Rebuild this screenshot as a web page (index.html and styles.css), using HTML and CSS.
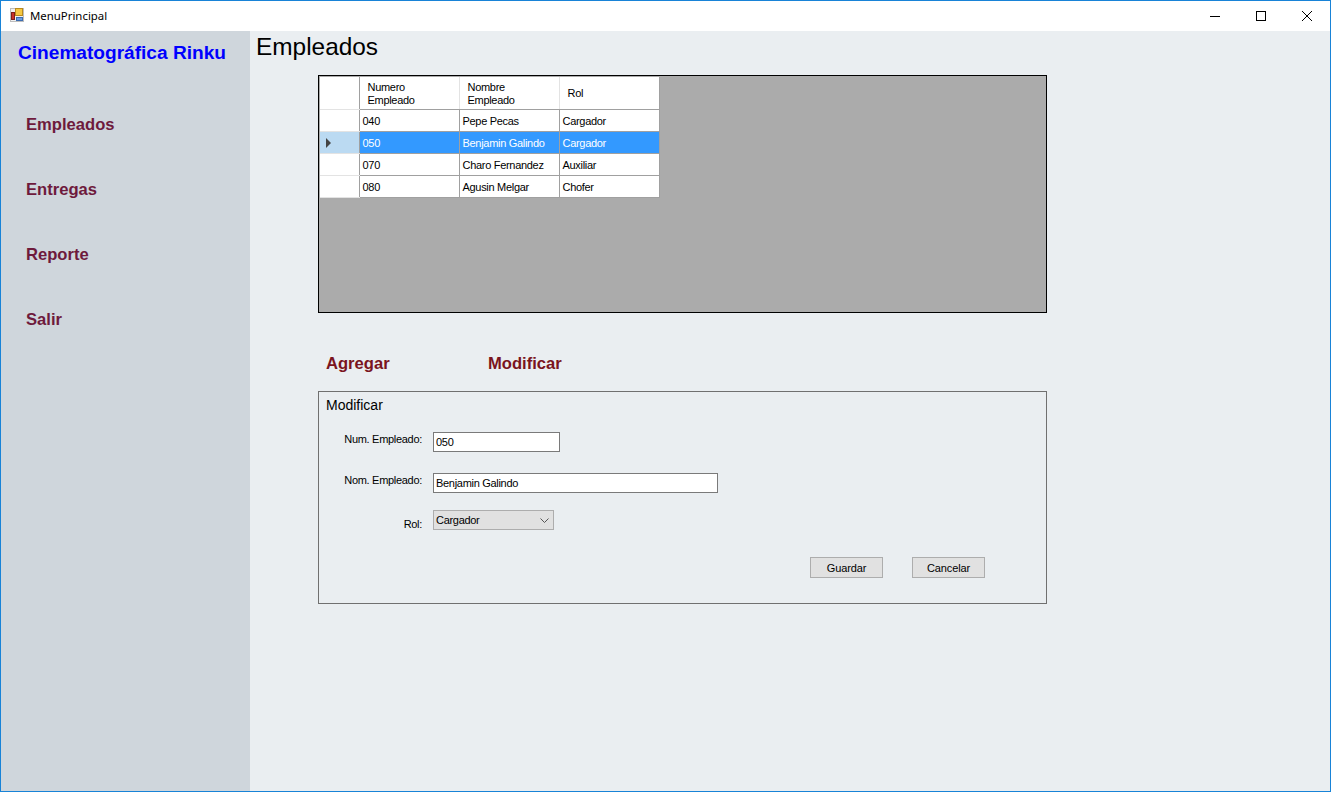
FILE: index.html
```html
<!DOCTYPE html>
<html lang="es">
<head>
    <meta charset="UTF-8">
    <title>MenuPrincipal</title>
    <link rel="stylesheet" href="styles.css">
</head>
<body>
    <div class="window">
        <div class="titlebar">
            <svg class="app-icon" width="14" height="14" viewBox="0 0 14 14">
                <rect x="0" y="0" width="14" height="14" fill="#bdbdbd"/>
                <rect x="1" y="1" width="12" height="12" fill="#f0f0f0"/>
                <rect x="5.5" y="0.5" width="7" height="7" fill="#f5c842" stroke="#b98a1e"/>
                <rect x="1.5" y="4.5" width="3" height="7" fill="#c8322a" stroke="#7d1f18"/>
                <rect x="6.5" y="9.5" width="6" height="3" fill="#6c9ee0" stroke="#3c6cb0"/>
            </svg>
            <span class="title-text">MenuPrincipal</span>
            <div class="win-controls">
                <svg class="win-btn" width="46" height="30" viewBox="0 0 46 30"><path d="M18 15.5H28" stroke="#000" fill="none"/></svg>
                <svg class="win-btn" width="46" height="30" viewBox="0 0 46 30"><rect x="18.5" y="10.5" width="9" height="9" stroke="#000" fill="none"/></svg>
                <svg class="win-btn" width="46" height="30" viewBox="0 0 46 30"><path d="M18 10L28 20M28 10L18 20" stroke="#000" fill="none"/></svg>
            </div>
        </div>
        <div class="main">
            <nav class="sidebar">
                <div class="brand">Cinematográfica Rinku</div>
                <ul class="menu">
                    <li>Empleados</li>
                    <li>Entregas</li>
                    <li>Reporte</li>
                    <li>Salir</li>
                </ul>
            </nav>
            <div class="content">
                <h1>Empleados</h1>
                <div class="panel">
                    <div class="grid-view">
                        <table>
                            <thead>
                                <tr>
                                    <th class="row-head"></th>
                                    <th>Numero<br>Empleado</th>
                                    <th>Nombre<br>Empleado</th>
                                    <th>Rol</th>
                                </tr>
                            </thead>
                            <tbody>
                                <tr>
                                    <td class="row-head"></td>
                                    <td>040</td>
                                    <td>Pepe Pecas</td>
                                    <td>Cargador</td>
                                </tr>
                                <tr class="selected">
                                    <td class="row-head"><span class="arrow"></span></td>
                                    <td>050</td>
                                    <td>Benjamin Galindo</td>
                                    <td>Cargador</td>
                                </tr>
                                <tr>
                                    <td class="row-head"></td>
                                    <td>070</td>
                                    <td>Charo Fernandez</td>
                                    <td>Auxiliar</td>
                                </tr>
                                <tr>
                                    <td class="row-head"></td>
                                    <td>080</td>
                                    <td>Agusin Melgar</td>
                                    <td>Chofer</td>
                                </tr>
                            </tbody>
                        </table>
                    </div>
                    <div class="actions">
                        <a class="action action-add">Agregar</a>
                        <a class="action">Modificar</a>
                    </div>
                    <form class="group">
                        <div class="group-title">Modificar</div>
                        <div class="fields">
                            <label class="num-label" for="num">Num. Empleado:</label>
                            <input class="num-input" type="text" id="num" value="050">
                            <label class="nom-label" for="nom">Nom. Empleado:</label>
                            <input class="nom-input" type="text" id="nom" value="Benjamin Galindo">
                            <label class="rol-label" for="rol">Rol:</label>
                            <div class="combo" id="rol">
                                <span>Cargador</span>
                                <svg width="9" height="5" viewBox="0 0 9 5"><path d="M0.5 0.5L4.5 4.5L8.5 0.5" stroke="#555" fill="none"/></svg>
                            </div>
                        </div>
                        <div class="buttons">
                            <button type="button">Guardar</button>
                            <button type="button">Cancelar</button>
                        </div>
                    </form>
                </div>
            </div>
        </div>
    </div>
</body>
</html>
```

FILE: styles.css
```css
* {
    box-sizing: border-box;
}
html, body {
    margin: 0;
    height: 100%;
    overflow: hidden;
}
body {
    font-family: "Liberation Sans", Arial, sans-serif;
    font-size: 11px;
    letter-spacing: -0.3px;
    color: #000;
}
.window {
    width: 1331px;
    height: 792px;
    border: 1px solid #1883d7;
    display: flex;
    flex-direction: column;
    background-color: #eaeef1;
}
.titlebar {
    height: 30px;
    background-color: #ffffff;
    display: flex;
    align-items: center;
    padding-left: 9px;
    flex-shrink: 0;
}
.app-icon {
    margin-right: 6px;
    margin-bottom: 2px;
}
.title-text {
    font-family: "Noto Sans", sans-serif;
    font-size: 11.4px;
    letter-spacing: 0;
    margin-bottom: 2px;
}
.win-controls {
    margin-left: auto;
    display: flex;
}
.main {
    flex: 1;
    display: flex;
    min-height: 0;
}
.sidebar {
    width: 249px;
    background-color: #cfd6dc;
    flex-shrink: 0;
}
.brand {
    color: #0000ff;
    font-size: 19.1px;
    font-weight: bold;
    letter-spacing: 0;
    padding: 11px 0 0 17px;
    line-height: 22px;
}
.menu {
    list-style: none;
    margin: 51px 0 0 0;
    padding: 0 0 0 25px;
}
.menu li {
    color: #6e1a3c;
    font-size: 16.6px;
    font-weight: bold;
    letter-spacing: 0;
    line-height: 20px;
    margin-bottom: 45px;
}
.content {
    flex: 1;
    padding: 0 0 0 5px;
}
h1 {
    margin: 0 0 0 1px;
    padding-top: 3px;
    font-size: 24.4px;
    font-weight: normal;
    letter-spacing: 0;
    line-height: 26px;
}
.panel {
    margin: 15px 0 0 63px;
    width: 729px;
}
.grid-view {
    height: 238px;
    background-color: #ababab;
    border: 1px solid #000;
    padding: 1px;
}
table {
    border-collapse: collapse;
    table-layout: fixed;
    width: 339px;
    background-color: #fff;
}
th, td {
    width: 100px;
    border: 1px solid #a0a0a0;
    padding: 1px 0 0 3px;
    text-align: left;
    font-weight: normal;
    height: 22px;
    white-space: nowrap;
}
th {
    height: 32px;
    padding: 2px 0 0 8px;
    line-height: 13px;
    border-top: none;
    border-right-color: #e3e3e3;
    border-bottom-color: #a0a0a0;
}
th:last-child, td:last-child {
    border-right-color: #a0a0a0;
}
.row-head {
    width: 39px;
    padding: 0;
    border-left: none;
    border-color: #a0a0a0 #a0a0a0 #e3e3e3 #fff;
}
.selected td {
    background-color: #3399ff;
    color: #fff;
}
.selected .row-head {
    background-color: #bbdaf2;
    padding-top: 2px;
}
.arrow {
    display: block;
    width: 0;
    height: 0;
    margin-left: 6px;
    border-left: 5px solid #444;
    border-top: 5px solid transparent;
    border-bottom: 5px solid transparent;
}
.actions {
    display: flex;
    padding: 41px 0 0 8px;
    height: 78px;
}
.action {
    color: #7a1420;
    font-size: 16.6px;
    font-weight: bold;
    letter-spacing: 0;
    line-height: 20px;
}
.action-add {
    width: 162px;
}
.group {
    height: 213px;
    border: 1px solid #707070;
    padding: 6px 0 0 7px;
}
.group-title {
    font-size: 14px;
    letter-spacing: 0;
    line-height: 15px;
}
.fields {
    display: grid;
    grid-template-columns: 96px auto;
    column-gap: 11px;
    justify-content: start;
    margin-top: 19px;
}
.fields label {
    text-align: right;
}
.num-label {
    padding-top: 1px;
}
.nom-label {
    padding-top: 1px;
}
.rol-label {
    padding-top: 8px;
}
input {
    height: 20px;
    border: 1px solid #7a7a7a;
    background-color: #fff;
    font-family: "Liberation Sans", Arial, sans-serif;
    font-size: 11px;
    letter-spacing: -0.3px;
    padding: 0 2px;
    color: #000;
}
.num-input {
    width: 127px;
    margin-bottom: 21px;
}
.nom-input {
    width: 285px;
    margin-bottom: 17px;
}
.combo {
    width: 121px;
    height: 20px;
    background-color: #e1e1e1;
    border: 1px solid #adadad;
    display: flex;
    align-items: center;
    justify-content: space-between;
    padding: 0 4px 0 2px;
}
.buttons {
    display: flex;
    gap: 29px;
    padding-left: 484px;
    margin-top: 27px;
}
button {
    width: 73px;
    height: 21px;
    background-color: #e1e1e1;
    border: 1px solid #adadad;
    font-family: "Liberation Sans", Arial, sans-serif;
    font-size: 11px;
    letter-spacing: -0.15px;
    color: #000;
    padding: 0;
}
```
